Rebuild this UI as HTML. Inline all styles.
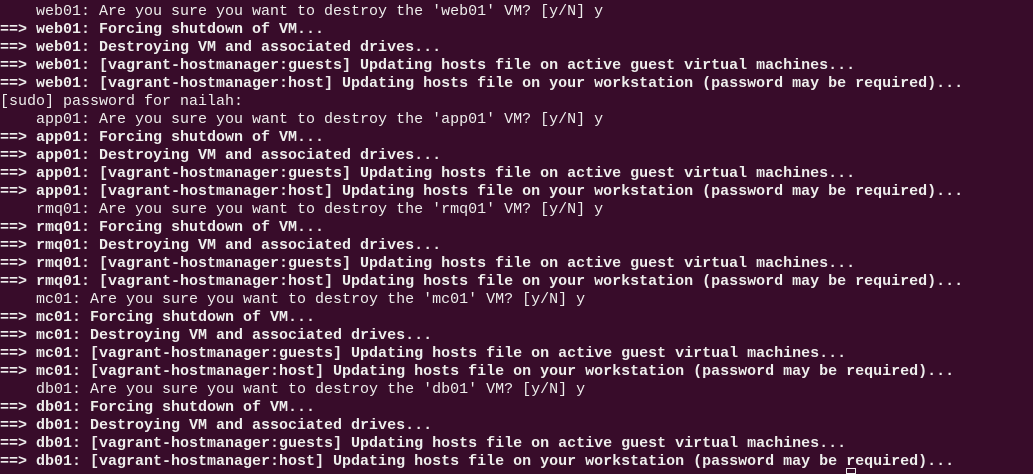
<!DOCTYPE html>
<html><head><meta charset="utf-8"><style>
html,body{margin:0;padding:0;background:#380c2a;width:1033px;height:472px;overflow:hidden}
pre{margin:0;padding:3px 0 0 0;font-family:"Liberation Mono",monospace;font-size:15px;line-height:18px;color:#eeeeec}
b{font-weight:bold}
.cur{position:absolute;left:846px;top:468px;width:10px;height:6px;border:1px solid #eee;box-sizing:border-box}
</style></head><body><pre>    web01: Are you sure you want to destroy the 'web01' VM? [y/N] y
<b>==&gt; web01: Forcing shutdown of VM...</b>
<b>==&gt; web01: Destroying VM and associated drives...</b>
<b>==&gt; web01: [vagrant-hostmanager:guests] Updating hosts file on active guest virtual machines...</b>
<b>==&gt; web01: [vagrant-hostmanager:host] Updating hosts file on your workstation (password may be required)...</b>
[sudo] password for nailah:
    app01: Are you sure you want to destroy the 'app01' VM? [y/N] y
<b>==&gt; app01: Forcing shutdown of VM...</b>
<b>==&gt; app01: Destroying VM and associated drives...</b>
<b>==&gt; app01: [vagrant-hostmanager:guests] Updating hosts file on active guest virtual machines...</b>
<b>==&gt; app01: [vagrant-hostmanager:host] Updating hosts file on your workstation (password may be required)...</b>
    rmq01: Are you sure you want to destroy the 'rmq01' VM? [y/N] y
<b>==&gt; rmq01: Forcing shutdown of VM...</b>
<b>==&gt; rmq01: Destroying VM and associated drives...</b>
<b>==&gt; rmq01: [vagrant-hostmanager:guests] Updating hosts file on active guest virtual machines...</b>
<b>==&gt; rmq01: [vagrant-hostmanager:host] Updating hosts file on your workstation (password may be required)...</b>
    mc01: Are you sure you want to destroy the 'mc01' VM? [y/N] y
<b>==&gt; mc01: Forcing shutdown of VM...</b>
<b>==&gt; mc01: Destroying VM and associated drives...</b>
<b>==&gt; mc01: [vagrant-hostmanager:guests] Updating hosts file on active guest virtual machines...</b>
<b>==&gt; mc01: [vagrant-hostmanager:host] Updating hosts file on your workstation (password may be required)...</b>
    db01: Are you sure you want to destroy the 'db01' VM? [y/N] y
<b>==&gt; db01: Forcing shutdown of VM...</b>
<b>==&gt; db01: Destroying VM and associated drives...</b>
<b>==&gt; db01: [vagrant-hostmanager:guests] Updating hosts file on active guest virtual machines...</b>
<b>==&gt; db01: [vagrant-hostmanager:host] Updating hosts file on your workstation (password may be required)...</b></pre>
<div class="cur"></div>
</body></html>
